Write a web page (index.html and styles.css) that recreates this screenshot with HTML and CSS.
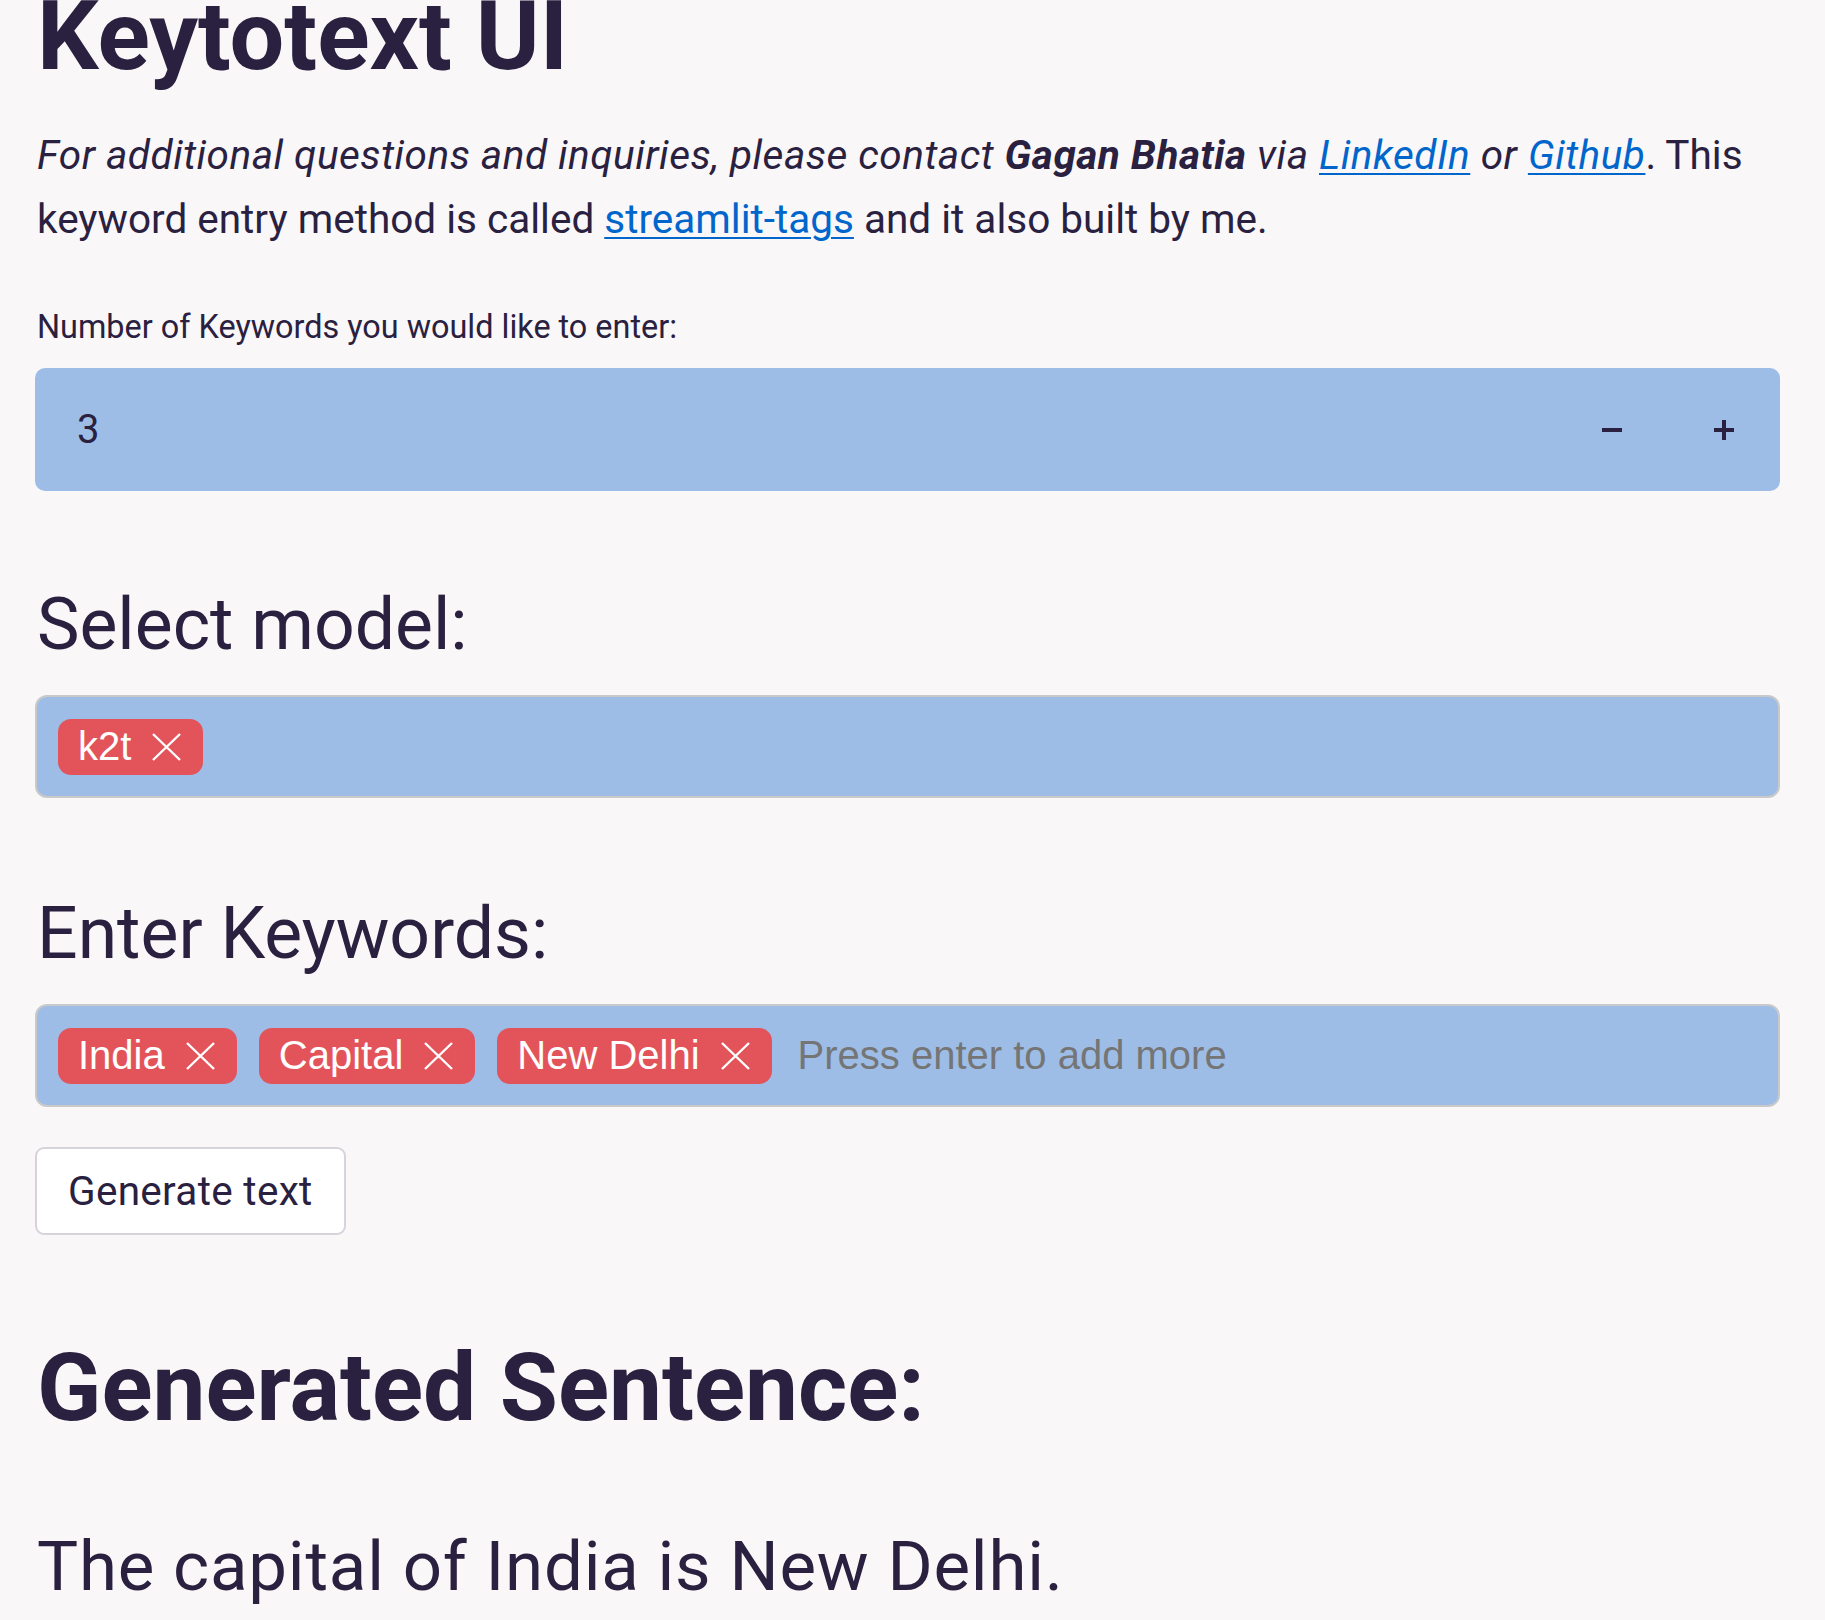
FILE: index.html
```html
<!DOCTYPE html>
<html lang="en">
<head>
<meta charset="utf-8">
<title>Keytotext UI</title>
<link rel="stylesheet" href="styles.css">
</head>
<body>
<main class="page">
  <h1 class="title">Keytotext UI</h1>
  <p class="intro"><em>For additional questions and inquiries, please contact <strong>Gagan Bhatia</strong> via <a href="#">LinkedIn</a> or <a href="#">Github</a></em>. This keyword entry method is called <a href="#">streamlit-tags</a> and it also built by me.</p>

  <label class="field-label">Number of Keywords you would like to enter:</label>
  <div class="number-input">
    <div class="number-value">3</div>
    <button class="step-btn" type="button" aria-label="decrement">
      <svg width="20" height="20" viewBox="0 0 20 20"><rect x="0" y="8" width="20" height="4" fill="#29213f"/></svg>
    </button>
    <button class="step-btn" type="button" aria-label="increment">
      <svg width="20" height="20" viewBox="0 0 20 20"><rect x="0" y="8" width="20" height="4" fill="#29213f"/><rect x="8" y="0" width="4" height="20" fill="#29213f"/></svg>
    </button>
  </div>

  <h3 class="section-label model-label">Select model:</h3>
  <div class="tag-box model-box">
    <span class="tag">k2t<svg class="tag-x" width="29" height="28" viewBox="0 0 29 28"><path d="M1 1 L28 27 M28 1 L1 27" stroke="#fff" stroke-width="2.4" fill="none"/></svg></span>
  </div>

  <h3 class="section-label keywords-label">Enter Keywords:</h3>
  <div class="tag-box keywords-box">
    <span class="tag">India<svg class="tag-x" width="29" height="28" viewBox="0 0 29 28"><path d="M1 1 L28 27 M28 1 L1 27" stroke="#fff" stroke-width="2.4" fill="none"/></svg></span>
    <span class="tag">Capital<svg class="tag-x" width="29" height="28" viewBox="0 0 29 28"><path d="M1 1 L28 27 M28 1 L1 27" stroke="#fff" stroke-width="2.4" fill="none"/></svg></span>
    <span class="tag">New Delhi<svg class="tag-x" width="29" height="28" viewBox="0 0 29 28"><path d="M1 1 L28 27 M28 1 L1 27" stroke="#fff" stroke-width="2.4" fill="none"/></svg></span>
    <span class="placeholder">Press enter to add more</span>
  </div>

  <button class="generate-btn" type="button">Generate text</button>

  <h2 class="result-title">Generated Sentence:</h2>
  <p class="result-text">The capital of India is New Delhi.</p>
</main>
</body>
</html>
```

FILE: styles.css
```css
html, body {
  margin: 0;
  padding: 0;
  background: #f9f7f8;
}

body {
  font-family: "Roboto", "Liberation Sans", sans-serif;
  color: #29213f;
  overflow: hidden;
}

.page {
  padding: 0 45px 0 35px;
}

.title {
  margin: 0 0 0 2px;
  font-size: 97px;
  font-weight: 700;
  line-height: 72px;
}

.intro {
  margin: 51px 0 0 2px;
  font-size: 40.5px;
  line-height: 64px;
}

.intro em {
  letter-spacing: 0.5px;
}

.intro strong {
  font-weight: 700;
}

.intro a {
  color: #0066cc;
  text-decoration: underline;
  text-decoration-thickness: 2px;
  text-underline-offset: 4px;
}

.field-label {
  display: block;
  margin: 52px 0 0 2px;
  font-size: 32.4px;
  line-height: 48px;
}

.number-input {
  display: flex;
  margin-top: 17px;
  height: 123px;
  background: #9dbde7;
  border-radius: 10px;
}

.number-value {
  flex: 1;
  display: flex;
  align-items: center;
  padding-left: 42px;
  font-size: 40px;
}

.step-btn {
  width: 112px;
  border: 0;
  background: transparent;
  display: flex;
  align-items: center;
  justify-content: center;
  padding: 0;
}

.section-label {
  margin: 0 0 0 2px;
  font-size: 71.5px;
  font-weight: 400;
  line-height: 86px;
}

.model-label {
  margin-top: 91px;
}

.keywords-label {
  margin-top: 93px;
}

.tag-box {
  margin-top: 27px;
  height: 99px;
  box-sizing: content-box;
  border: 2px solid #c9c9c9;
  border-radius: 12px;
  background: #9dbde7;
  display: flex;
  align-items: center;
  gap: 22px;
  padding: 0 21px;
  font-family: "Liberation Sans", Arial, sans-serif;
}

.tag {
  display: inline-flex;
  align-items: center;
  height: 56px;
  padding: 0 22px 0 20px;
  background: #e3545a;
  color: #ffffff;
  border-radius: 13px;
  font-size: 40px;
  gap: 21px;
}

.tag-x {
  display: block;
}

.placeholder {
  margin-left: 4px;
  font-size: 40px;
  color: #757575;
}

.generate-btn {
  display: block;
  margin-top: 40px;
  height: 88px;
  padding: 0 31px;
  background: #ffffff;
  border: 2px solid #d6d3da;
  border-radius: 9px;
  font-family: "Roboto", "Liberation Sans", sans-serif;
  font-size: 40.5px;
  letter-spacing: 0.3px;
  color: #29213f;
}

.result-title {
  margin: 98px 0 0 2px;
  font-size: 94.5px;
  font-weight: 700;
  line-height: 110px;
}

.result-text {
  margin: 74px 0 0 2px;
  font-size: 69px;
  letter-spacing: 0.8px;
  line-height: 100px;
}
```
